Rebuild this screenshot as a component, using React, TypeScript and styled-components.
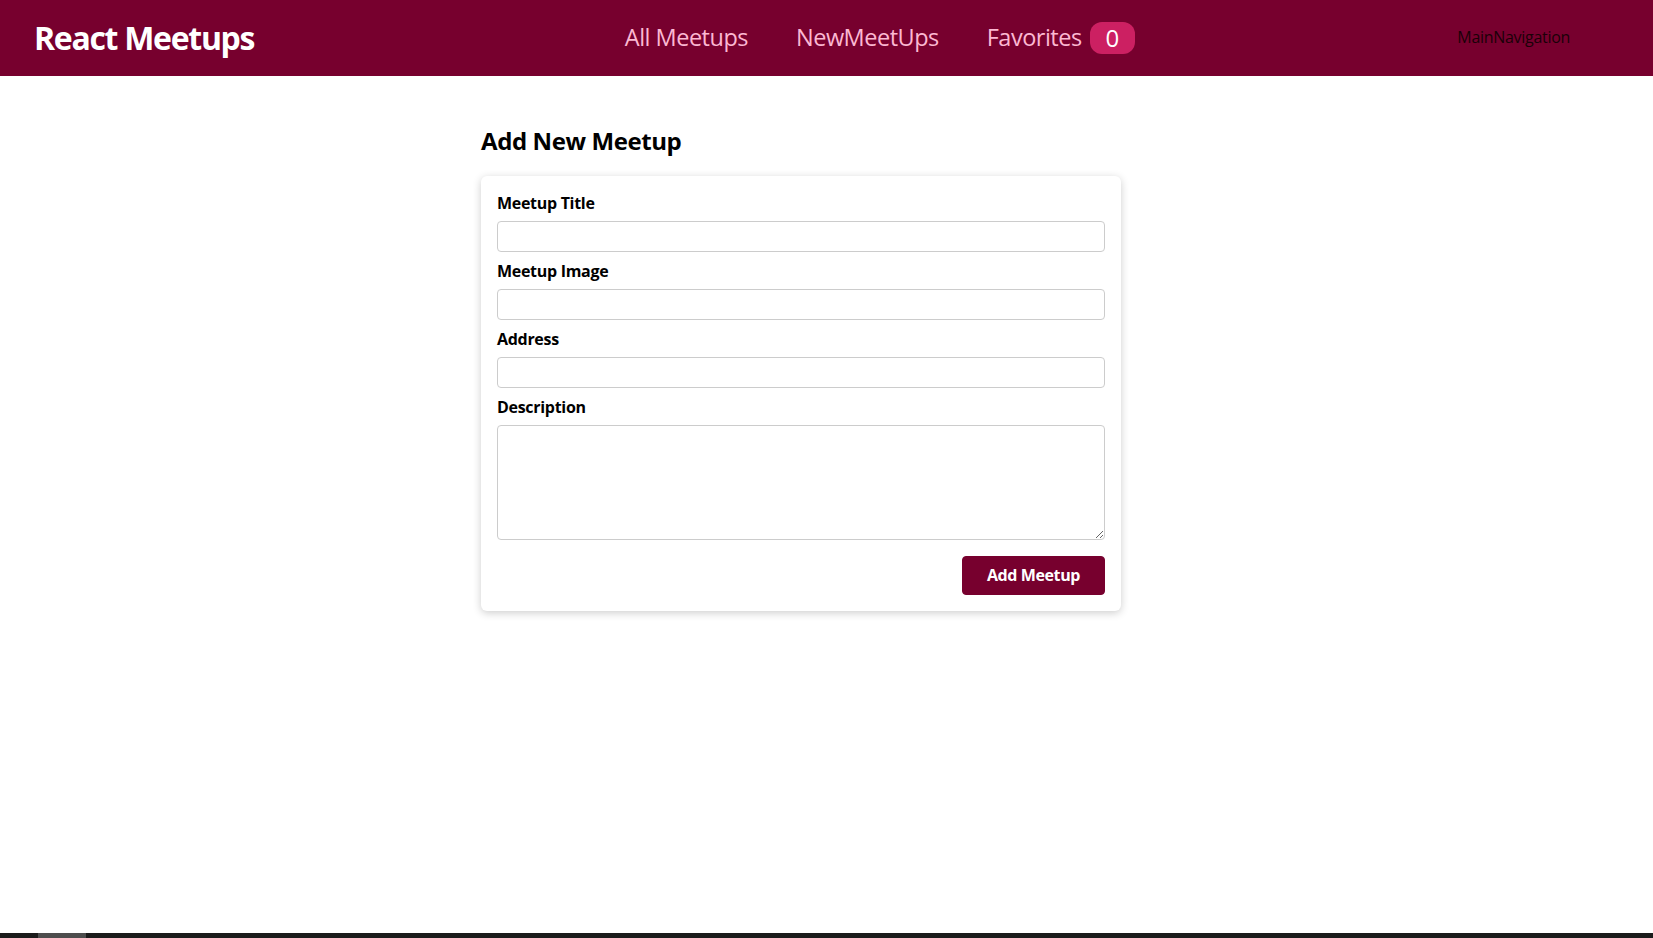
import React from "react";
import styled, { createGlobalStyle } from "styled-components";

const GlobalStyle = createGlobalStyle`
  * { box-sizing: border-box; }
  html, body { margin: 0; padding: 0; }
  body {
    font-family: "Open Sans", "Noto Sans", sans-serif;
    font-size: 16px;
    line-height: 1.33;
    background: #ffffff;
    color: #000000;
  }
`;

const Page = styled.div`
  display: flex;
  flex-direction: column;
  height: 938px;
  overflow: hidden;
`;

const Header = styled.header`
  height: 76px;
  flex: 0 0 76px;
  background-color: #77002e;
  display: flex;
  align-items: center;
  padding: 0 83px 0 34px;
`;

const Logo = styled.div`
  font-size: 32px;
  font-weight: 700;
  color: #ffffff;
  letter-spacing: -1.3px;
  line-height: 1.33;
`;

const Nav = styled.nav`
  margin-left: auto;
`;

const NavList = styled.ul`
  list-style: none;
  margin: 0;
  padding: 0;
  display: flex;
  align-items: baseline;
`;

const NavItem = styled.li`
  margin-left: 48px;
  display: flex;
  align-items: center;
  &:first-child { margin-left: 0; }
`;

const NavLink = styled.a`
  font-size: 23.5px;
  color: #fcb8d2;
  text-decoration: none;
  letter-spacing: -0.5px;
  cursor: pointer;
`;

const Badge = styled.span`
  background-color: #cc2062;
  color: #ffffff;
  border-radius: 12px;
  padding: 0 16px;
  margin-left: 8px;
  font-size: 24px;
  line-height: 32px;
  height: 32px;
  display: inline-block;
`;

const Caption = styled.div`
  margin-left: 322px;
  font-size: 16px;
  color: #1a0008;
  letter-spacing: -0.3px;
`;

const Main = styled.main`
  flex: 1;
  padding: 49px 51px 0 0;
`;

const Section = styled.section`
  width: 640px;
  margin: 0 auto;
`;

const Title = styled.h1`
  font-size: 24px;
  font-weight: 700;
  line-height: 32px;
  margin: 0 0 19px;
  letter-spacing: -0.4px;
`;

const Card = styled.div`
  background: #ffffff;
  border-radius: 6px;
  box-shadow: 0 2px 8px rgba(0, 0, 0, 0.2);
`;

const Form = styled.form`
  padding: 16px;
`;

const Control = styled.div`
  margin-bottom: 8px;
`;

const Label = styled.label`
  display: block;
  font-weight: 700;
  font-size: 16px;
  line-height: 21px;
  padding-top: 1px;
  margin-bottom: 7px;
  letter-spacing: -0.3px;
`;

const fieldCss = `
  display: block;
  width: 100%;
  font: inherit;
  line-height: 21px;
  border-radius: 4px;
  border: 1px solid #cccccc;
  padding: 4px;
  background: #ffffff;
  margin: 0;
`;

const Input = styled.input`
  ${fieldCss}
  height: 31px;
`;

const TextArea = styled.textarea`
  ${fieldCss}
  height: 115px;
`;

const Actions = styled.div`
  margin-top: 16px;
  display: flex;
  justify-content: flex-end;
`;

const Button = styled.button`
  font: inherit;
  font-weight: 700;
  line-height: 21px;
  cursor: pointer;
  background-color: #77002e;
  color: #ffffff;
  padding: 8px 24px;
  border: 1px solid #77002e;
  border-radius: 4px;
  letter-spacing: -0.4px;
  height: 39px;
`;

const ScrollStrip = styled.div`
  flex: 0 0 5px;
  height: 5px;
  background: #1b1b1b;
  padding-left: 38px;
  display: flex;
`;

const Thumb = styled.div`
  width: 48px;
  background: #4d4d4d;
`;

export default function App() {
  return (
    <>
      <GlobalStyle />
      <Page>
        <Header>
          <Logo>React Meetups</Logo>
          <Nav>
            <NavList>
              <NavItem>
                <NavLink>All Meetups</NavLink>
              </NavItem>
              <NavItem>
                <NavLink>NewMeetUps</NavLink>
              </NavItem>
              <NavItem>
                <NavLink>Favorites</NavLink>
                <Badge>0</Badge>
              </NavItem>
            </NavList>
          </Nav>
          <Caption>MainNavigation</Caption>
        </Header>
        <Main>
          <Section>
            <Title>Add New Meetup</Title>
            <Card>
              <Form onSubmit={(e) => e.preventDefault()}>
                <Control>
                  <Label htmlFor="title">Meetup Title</Label>
                  <Input type="text" id="title" />
                </Control>
                <Control>
                  <Label htmlFor="image">Meetup Image</Label>
                  <Input type="url" id="image" />
                </Control>
                <Control>
                  <Label htmlFor="address">Address</Label>
                  <Input type="text" id="address" />
                </Control>
                <Control>
                  <Label htmlFor="description">Description</Label>
                  <TextArea id="description" rows={5} />
                </Control>
                <Actions>
                  <Button>Add Meetup</Button>
                </Actions>
              </Form>
            </Card>
          </Section>
        </Main>
        <ScrollStrip>
          <Thumb />
        </ScrollStrip>
      </Page>
    </>
  );
}
